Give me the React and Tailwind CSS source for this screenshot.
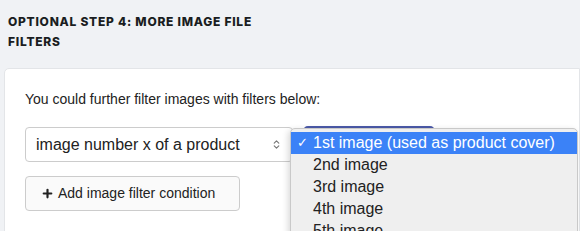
import { Plus, ChevronsUpDown } from 'lucide-react'

const options = ['1st image (used as product cover)', '2nd image', '3rd image', '4th image', '5th image']

export default function App() {
  return (
    <div className="h-[231px] w-[580px] overflow-hidden bg-[#f0f2f5] font-['Liberation_Sans',Arial,sans-serif] text-[#212529]">
      <h3 className="w-[264px] pl-[8px] pt-[12px] font-['Inter',sans-serif] text-[12px] font-extrabold uppercase leading-[20px] tracking-[0.062em] text-[#1a1d21]">
        Optional step 4: more image file filters
      </h3>

      <div className="ml-[4px] mt-[16px] h-[200px] rounded-tl-[5px] border border-[#e3e5e8] bg-white pl-[20px] pt-[20px]">
        <p className="text-[14px] leading-[20px] text-[#222]">You could further filter images with filters below:</p>

        <div className="relative mt-[18px] flex items-start gap-[10px]">
          <div className="flex h-[35px] w-[268px] items-center justify-between rounded-[4px] border border-[#ccc] bg-white pl-[10px] pr-[10px] text-[16px] text-[#222]">
            <span>image number x of a product</span>
            <ChevronsUpDown className="h-[11px] w-[11px] text-[#777]" strokeWidth={2.5} />
          </div>
          <div className="-mt-[1px] h-[36px] w-[132px] rounded-[5px] border-2 border-[#4b59a8] bg-white" />

          {/* native select popup */}
          <div className="absolute left-[265px] top-[1px] w-[288px] rounded-[5px] border border-[#c9c9c9] bg-[#efefef] py-[3px] shadow-[-2px_2px_6px_rgba(0,0,0,0.15)]">
            {options.map((o, i) => (
              <div
                key={o}
                className={
                  i === 0
                    ? 'flex h-[22px] items-center bg-[#3b82f7] pl-[6px] text-[16px] text-white'
                    : 'flex h-[22px] items-center pl-[6px] text-[16px] text-[#222]'
                }
              >
                <span className="w-[16px] text-[13px]">{i === 0 ? '✓' : ''}</span>
                <span>{o}</span>
              </div>
            ))}
          </div>
        </div>

        <button className="mt-[14px] flex h-[35px] w-[215px] items-center gap-[4px] rounded-[4px] border border-[#ccc] bg-[#fafafa] pl-[15px] text-[14px] text-[#222]">
          <Plus className="h-[13px] w-[13px]" strokeWidth={4} />
          Add image filter condition
        </button>
      </div>
    </div>
  )
}
